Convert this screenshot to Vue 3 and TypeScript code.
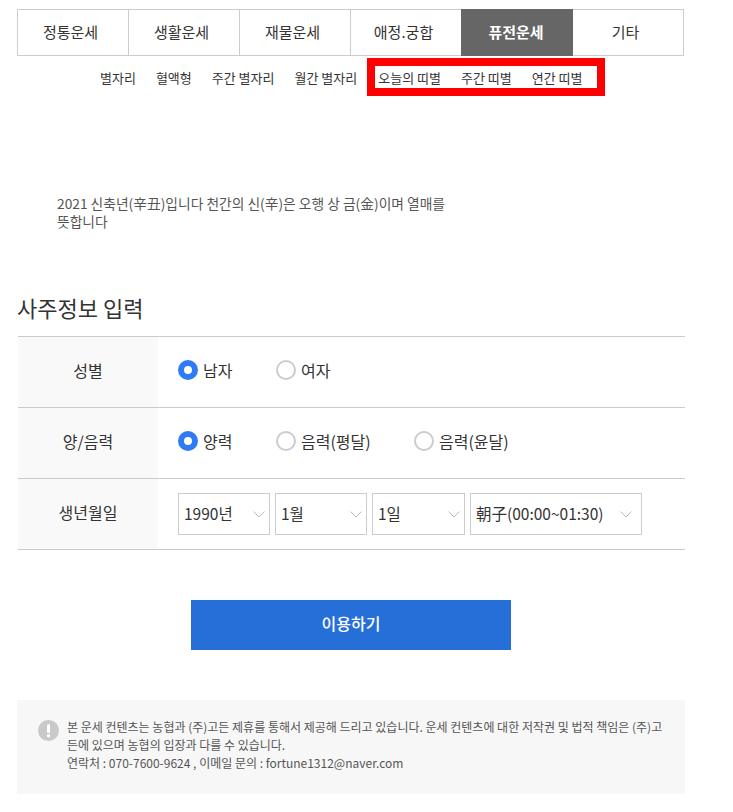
<template>
  <div class="page">
    <ul class="tabs">
      <li v-for="t in tabs" :key="t" :class="{ on: t === '퓨전운세' }">{{ t }}</li>
    </ul>

    <div class="subs">
      <a v-for="s in subs" :key="s">{{ s }}</a>
      <div class="mark">
        <a v-for="s in marked" :key="s">{{ s }}</a>
      </div>
    </div>

    <p class="desc">2021 신축년(辛丑)입니다 천간의 신(辛)은 오행 상 금(金)이며 열매를 뜻합니다</p>

    <h2 class="title">사주정보 입력</h2>

    <div class="form">
      <div class="row">
        <div class="label">성별</div>
        <div class="field">
          <label class="radio w98"><i class="dot on"></i>남자</label>
          <label class="radio"><i class="dot"></i>여자</label>
        </div>
      </div>
      <div class="row">
        <div class="label">양/음력</div>
        <div class="field">
          <label class="radio w98"><i class="dot on"></i>양력</label>
          <label class="radio w138"><i class="dot"></i>음력(평달)</label>
          <label class="radio"><i class="dot"></i>음력(윤달)</label>
        </div>
      </div>
      <div class="row">
        <div class="label">생년월일</div>
        <div class="field selects">
          <div v-for="s in selects" :key="s.text" class="select" :class="s.cls">
            <span>{{ s.text }}</span>
            <svg width="12" height="7" viewBox="0 0 12 7"><path d="M.5.5 6 6 11.500.5" fill="none" stroke="#bbb" /></svg>
          </div>
        </div>
      </div>
    </div>

    <button class="submit" type="button">이용하기</button>

    <div class="notice">
      <svg class="ico" width="21" height="21" viewBox="0 0 21 21">
        <circle cx="10.500" cy="10.500" r="10.500" fill="#c9c9c9" />
        <rect x="9" y="4" width="3" height="9" rx="1.500" fill="#fff" />
        <circle cx="10.500" cy="15.800" r="1.700" fill="#fff" />
      </svg>
      <p>
        본 운세 컨텐츠는 농협과 (주)고든 제휴를 통해서 제공해 드리고 있습니다. 운세 컨텐츠에 대한 저작권 및 법적 책임은 (주)고든에 있으며 농협의 입장과 다를 수 있습니다.<br />
        연락처 : 070-7600-9624 , 이메일 문의 : fortune1312@naver.com
      </p>
    </div>
  </div>
</template>

<script setup lang="ts">
const tabs: string[] = ['정통운세', '생활운세', '재물운세', '애정.궁합', '퓨전운세', '기타']
const subs: string[] = ['별자리', '혈액형', '주간 별자리', '월간 별자리']
const marked: string[] = ['오늘의 띠별', '주간 띠별', '연간 띠별']
const selects = [
  { text: '1990년', cls: 'year' },
  { text: '1월', cls: 'year' },
  { text: '1일', cls: 'day' },
  { text: '朝子(00:00~01:30)', cls: 'time' },
]
</script>

<style>
body {
  background: #fff;
}
</style>

<style scoped>
.page {
  width: 668px;
  margin-left: 17px;
  padding-top: 9px;
  font-family: 'Noto Sans CJK KR', 'Noto Sans', sans-serif;
  color: #333;
}
.tabs {
  display: flex;
  width: 667px;
  height: 47px;
  margin: 0;
  padding: 0;
  box-sizing: border-box;
  list-style: none;
  border: 1px solid #ccc;
}
.tabs li {
  box-sizing: border-box;
  width: 111px;
  display: flex;
  align-items: center;
  justify-content: center;
  margin: -1px 0;
  padding: 0 5px 3px 0;
  font-size: 15px;
  border-right: 1px solid #ccc;
}
.tabs li:nth-child(4) {
  width: 110px;
  border-right: 0;
}
.tabs li:last-child {
  flex: 1;
  border-right: 0;
}
.tabs li.on {
  width: 112px;
  padding-right: 2px;
  background: #666;
  color: #fff;
  font-weight: 700;
  border-right: 0;
}
.subs {
  display: flex;
  align-items: center;
  height: 38px;
  margin-top: 2px;
  padding-left: 83px;
  font-size: 13px;
}
.subs > a {
  margin-right: 20px;
}
.subs > a:nth-child(4) {
  margin-right: 10px;
}
.mark {
  display: flex;
  gap: 20px;
  box-sizing: border-box;
  width: 238px;
  height: 38px;
  align-items: center;
  padding-left: 3px;
  border: 8px solid #f00;
}
.desc {
  width: 400px;
  margin: 98px 0 0 40px;
  font-size: 13.750px;
  line-height: 18px;
  color: #555;
  word-break: keep-all;
}
.title {
  margin: 61px 0 0;
  font-size: 22px;
  line-height: 32px;
  font-weight: 400;
}
.form {
  margin: 13px 0 0 1px;
  border-top: 1px solid #ccc;
}
.row {
  display: flex;
  height: 70px;
  border-bottom: 1px solid #ccc;
}
.label {
  display: flex;
  align-items: center;
  justify-content: center;
  box-sizing: border-box;
  width: 140px;
  padding-bottom: 5px;
  background: #f9f9f9;
  font-size: 16px;
}
.field {
  display: flex;
  align-items: center;
  padding: 0 0 4px 20px;
  font-size: 16px;
}
.radio {
  display: flex;
  align-items: center;
  gap: 5px;
}
.w98 {
  width: 98px;
}
.w138 {
  width: 138px;
}
.dot {
  width: 20px;
  height: 20px;
  box-sizing: border-box;
  border: 2px solid #ccc;
  border-radius: 50%;
  background: #fff;
}
.dot.on {
  border: 6px solid #2f7bf6;
}
.selects {
  gap: 5px;
  padding-bottom: 0;
  font-size: 15.500px;
}
.select {
  display: flex;
  align-items: center;
  justify-content: space-between;
  box-sizing: border-box;
  height: 42px;
  padding: 0 4px 3px 5px;
  border: 1px solid #ccc;
  background: #fff;
}
.select svg {
  margin-top: 3px;
}
.select.year {
  width: 92px;
}
.select.day {
  width: 93px;
}
.select.time {
  width: 172px;
  padding-right: 9px;
}
.submit {
  display: block;
  width: 320px;
  height: 50px;
  margin: 50px 0 0 174px;
  padding: 0 0 4px;
  border: 0;
  background: #266fd9;
  color: #fff;
  font-family: inherit;
  font-size: 16px;
  font-weight: 500;
}
.notice {
  display: flex;
  gap: 8px;
  box-sizing: border-box;
  height: 94px;
  margin-top: 50px;
  padding: 20px 20px 0 21px;
  background: #f7f7f7;
}
.ico {
  flex: none;
}
.notice p {
  margin: -2px 0 0;
  font-size: 12px;
  line-height: 18px;
  color: #555;
  word-break: break-all;
}
</style>
